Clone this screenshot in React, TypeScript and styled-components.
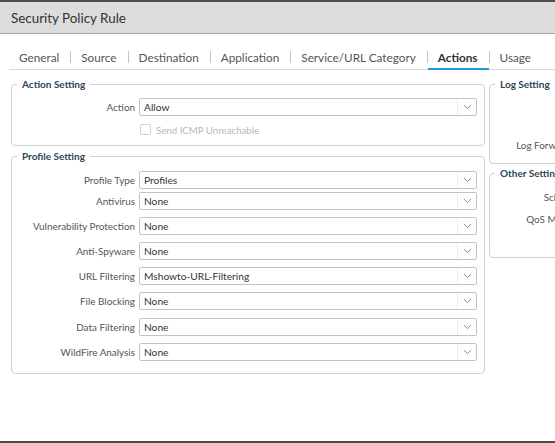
import React from "react";
import styled, { createGlobalStyle } from "styled-components";

const GlobalStyle = createGlobalStyle`
  html, body {
    margin: 0;
    padding: 0;
    background: #4d4d4d;
    overflow: hidden;
  }
  body {
    font-family: Lato, "Open Sans", "Liberation Sans", sans-serif;
  }
`;

const Dialog = styled.div`
  margin-top: 2px;
  width: 555px;
  height: 439px;
  background: #fff;
  overflow: hidden;
  display: flex;
  flex-direction: column;
`;

const TitleBar = styled.div`
  height: 31px;
  flex: none;
  background: #dcdcdc;
  border-bottom: 1px solid #a9a9a9;
  display: flex;
  align-items: center;
  padding-left: 11px;
  font-size: 13.4px;
  color: #333;
`;

const TabBar = styled.div`
  display: flex;
  align-items: center;
  height: 25px;
  flex: none;
  margin: 10px 0 0 9px;
  border-bottom: 1px solid #d9d9d9;
  white-space: nowrap;
`;

const Tab = styled.div<{ $active?: boolean }>`
  height: 25px;
  line-height: 24px;
  box-sizing: border-box;
  padding: 1px 11px 0 10px;
  font-size: 11.75px;
  color: ${(p) => (p.$active ? "#333" : "#555")};
  font-weight: ${(p) => (p.$active ? 700 : 400)};
  border-bottom: 2px solid ${(p) => (p.$active ? "#1d9ad6" : "transparent")};
  margin-bottom: -1px;
`;

const TabSep = styled.span`
  width: 1px;
  height: 12px;
  background: #c4c4c4;
  flex: none;
`;

const Content = styled.div`
  display: flex;
  gap: 4px;
  padding: 7px 0 0 11px;
  align-items: flex-start;
`;

const Column = styled.div<{ $width: number; $gap: number }>`
  width: ${(p) => p.$width}px;
  flex: none;
  display: flex;
  flex-direction: column;
  gap: ${(p) => p.$gap}px;
`;

const Group = styled.fieldset<{ $bottom: number }>`
  margin: 0;
  padding: 0 7px ${(p) => p.$bottom}px;
  border: 1px solid #d0d0d0;
  border-radius: 4px;
  min-width: 0;
`;

const Legend = styled.legend`
  font-size: 10px;
  font-weight: 700;
  color: #2e4559;
  line-height: 14px;
  padding: 0 5px;
  margin-left: -2px;
  white-space: nowrap;
`;

const Row = styled.div<{ $label: number; $top: number }>`
  display: grid;
  grid-template-columns: ${(p) => p.$label}px 1fr;
  column-gap: 4px;
  align-items: center;
  margin-top: ${(p) => p.$top}px;
`;

const Label = styled.span`
  font-size: 9.9px;
  color: #555;
  text-align: right;
  white-space: nowrap;
`;

const SelectBox = styled.div`
  height: 18px;
  box-sizing: border-box;
  border: 1px solid #c3c3c3;
  border-radius: 2px;
  display: flex;
  align-items: center;
  background: #fff;
`;

const SelectValue = styled.span`
  flex: 1;
  padding-left: 4px;
  font-size: 10.2px;
  color: #333;
  white-space: nowrap;
  overflow: hidden;
`;

const Caret = styled.span`
  width: 18px;
  height: 100%;
  border-left: 1px solid #ececec;
  display: flex;
  align-items: center;
  justify-content: center;
`;

const CheckLine = styled.label<{ $disabled?: boolean }>`
  display: flex;
  align-items: center;
  gap: 5px;
  height: 11px;
  font-size: 9.7px;
  color: ${(p) => (p.$disabled ? "#b8b8b8" : "#555")};
  white-space: nowrap;
`;

const Box = styled.span`
  width: 11px;
  height: 11px;
  box-sizing: border-box;
  border: 1px solid #cfcfcf;
  border-radius: 2px;
  margin-left: 1px;
  flex: none;
`;

const Select = ({ value }: { value: string }) => (
  <SelectBox>
    <SelectValue>{value}</SelectValue>
    <Caret>
      <svg width="9" height="6" viewBox="0 0 9 6">
        <path d="M0.8 1 L4.5 4.6 L8.2 1" fill="none" stroke="#8a8a8a" strokeWidth="1" />
      </svg>
    </Caret>
  </SelectBox>
);

const tabs = [
  "General",
  "Source",
  "Destination",
  "Application",
  "Service/URL Category",
  "Actions",
  "Usage",
];

const profiles: [string, string, number][] = [
  ["Profile Type", "Profiles", 8],
  ["Antivirus", "None", 3],
  ["Vulnerability Protection", "None", 7],
  ["Anti-Spyware", "None", 7],
  ["URL Filtering", "Mshowto-URL-Filtering", 7],
  ["File Blocking", "None", 7],
  ["Data Filtering", "None", 8],
  ["WildFire Analysis", "None", 7],
];

export default function App() {
  return (
    <>
      <GlobalStyle />
      <Dialog>
        <TitleBar>Security Policy Rule</TitleBar>
        <TabBar>
          {tabs.map((t, i) => (
            <React.Fragment key={t}>
              {i > 0 && <TabSep />}
              <Tab $active={t === "Actions"}>{t}</Tab>
            </React.Fragment>
          ))}
        </TabBar>
        <Content>
          <Column $width={474} $gap={3}>
            <Group $bottom={10}>
              <Legend>Action Setting</Legend>
              <Row $label={116} $top={7}>
                <Label>Action</Label>
                <Select value="Allow" />
              </Row>
              <Row $label={116} $top={8}>
                <span />
                <CheckLine $disabled>
                  <Box />
                  Send ICMP Unreachable
                </CheckLine>
              </Row>
            </Group>
            <Group $bottom={12}>
              <Legend>Profile Setting</Legend>
              {profiles.map(([label, value, top]) => (
                <Row key={label} $label={116} $top={top}>
                  <Label>{label}</Label>
                  <Select value={value} />
                </Row>
              ))}
            </Group>
          </Column>
          <Column $width={320} $gap={2}>
            <Group $bottom={9}>
              <Legend>Log Setting</Legend>
              <Row $label={86} $top={8}>
                <span />
                <CheckLine>
                  <Box />
                  Log at Session Start
                </CheckLine>
              </Row>
              <Row $label={86} $top={8}>
                <span />
                <CheckLine>
                  <Box />
                  Log at Session End
                </CheckLine>
              </Row>
              <Row $label={86} $top={7}>
                <Label>Log Forwarding</Label>
                <Select value="None" />
              </Row>
            </Group>
            <Group $bottom={9}>
              <Legend>Other Settings</Legend>
              <Row $label={86} $top={8}>
                <Label>Schedule</Label>
                <Select value="None" />
              </Row>
              <Row $label={86} $top={4}>
                <Label>QoS Marking</Label>
                <Select value="None" />
              </Row>
              <Row $label={86} $top={9}>
                <span />
                <CheckLine>
                  <Box />
                  Disable Server Response Inspection
                </CheckLine>
              </Row>
            </Group>
          </Column>
        </Content>
      </Dialog>
    </>
  );
}
